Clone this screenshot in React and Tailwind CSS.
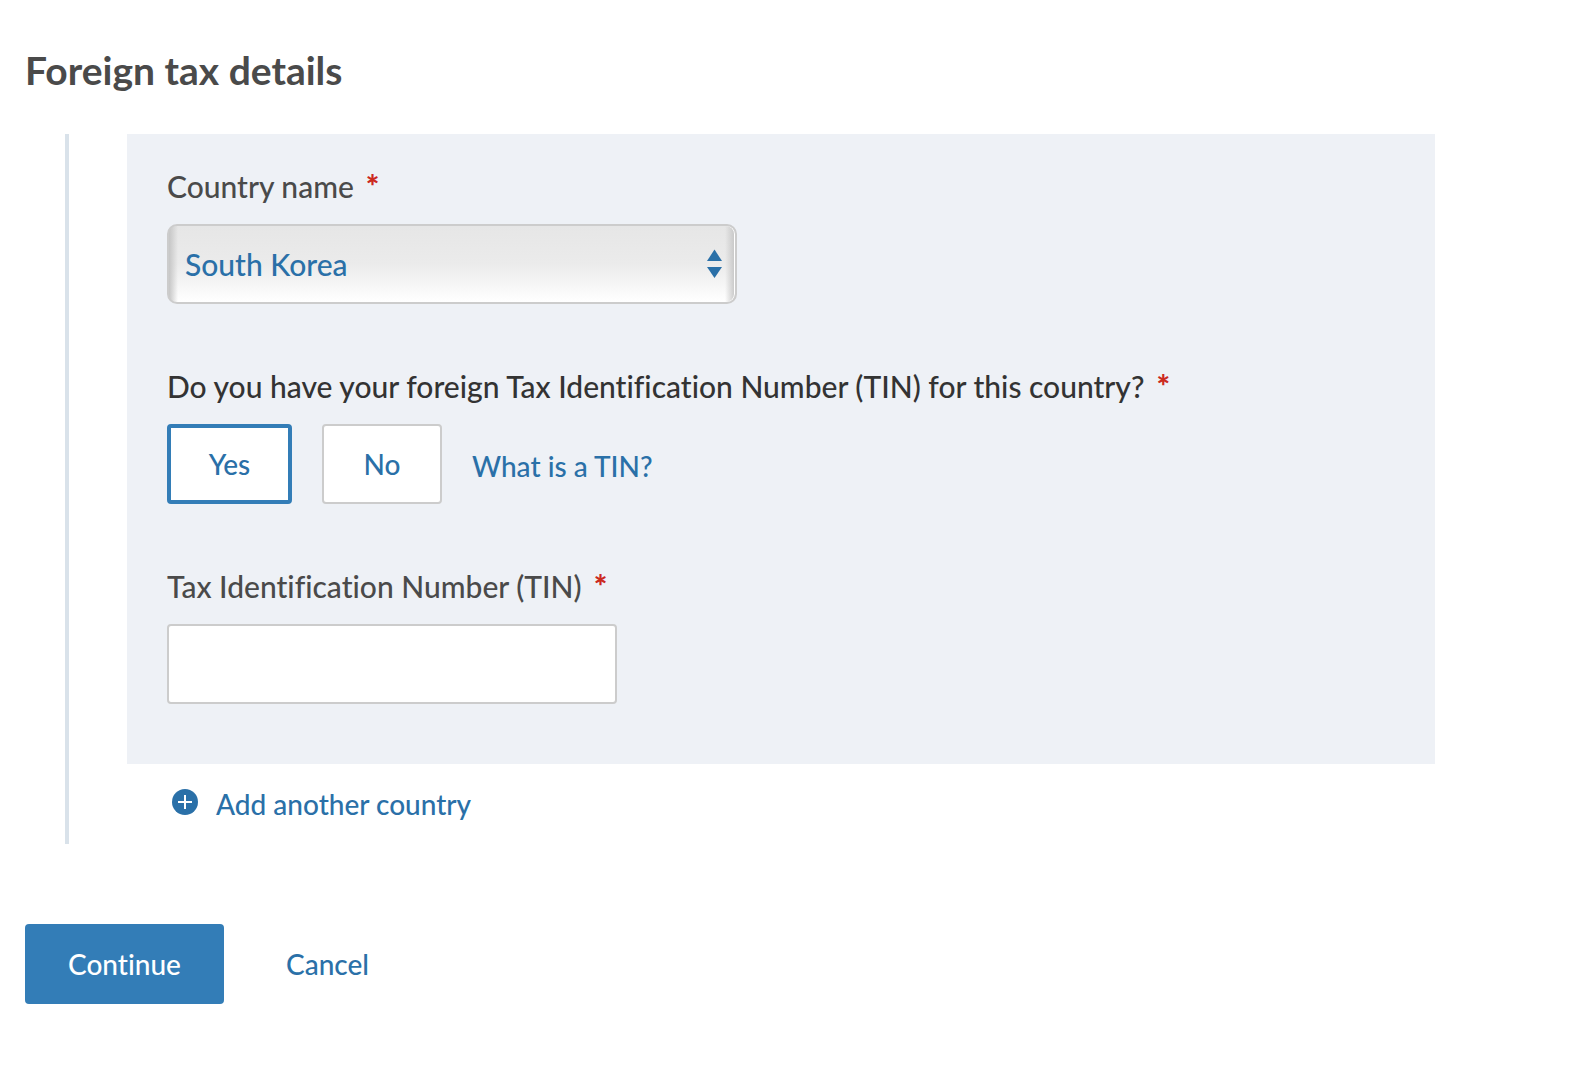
import { useState } from "react";

const Required = () => (
  <span className="ml-3 text-[32px] leading-none font-black text-[#cc2a1e]">
    *
  </span>
);

const Label = ({ htmlFor, children }) => (
  <label
    htmlFor={htmlFor}
    className="block h-[60px] text-[30px] leading-[44px] text-[#4a4a4a]"
  >
    {children}
    <Required />
  </label>
);

const ChoiceButton = ({ selected, onClick, children }) => (
  <button
    type="button"
    aria-pressed={selected}
    onClick={onClick}
    className={`h-20 cursor-pointer rounded-[4px] bg-white text-[28px] text-[#2a70a8] ${
      selected
        ? "w-[125px] border-4 border-[#337db7]"
        : "w-[120px] border-2 border-[#cccccc]"
    }`}
  >
    {children}
  </button>
);

const App = () => {
  const [country, setCountry] = useState("South Korea");
  const [hasTin, setHasTin] = useState(true);
  const [tin, setTin] = useState("");

  return (
    <form
      onSubmit={(e) => e.preventDefault()}
      className="min-h-screen bg-white pt-10 pr-[139px] pb-10 pl-[25px] font-['Lato','Open_Sans',sans-serif] font-medium [font-variant-ligatures:none]"
    >
      <h1 className="text-[39px] leading-[60px] font-bold text-[#4a4a4a]">
        Foreign tax details
      </h1>

      <div className="mt-[34px] ml-10 border-l-4 border-[#d9e2ea] pl-[58px]">
        <div className="bg-[#eef1f6] px-10 pt-[30px] pb-[60px]">
          {/* Country */}
          <Label htmlFor="country">Country name</Label>
          <div className="relative w-full max-w-[570px]">
            <select
              id="country"
              value={country}
              onChange={(e) => setCountry(e.target.value)}
              className="h-20 w-full appearance-none rounded-[10px] border-2 border-[#cccccc] bg-[linear-gradient(to_right,#c6c6c6,transparent_9px,transparent_calc(100%-10px),#c6c6c6),linear-gradient(#e6e6e6,#ebebeb_50%,#ffffff)] px-4 text-[30px] text-[#2a70a8] shadow-[inset_-1px_0_0_#ffffff]"
            >
              <option>South Korea</option>
            </select>
            <svg
              viewBox="0 0 15 30"
              className="pointer-events-none absolute top-6 right-[15px] h-[30px] w-[15px] fill-[#2a70a8]"
            >
              <path d="M7.5 1.5 15 13H0z" />
              <path d="M0 19h15L7.5 30z" />
            </svg>
          </div>

          {/* TIN question */}
          <div className="mt-[60px]" role="group" aria-labelledby="has-tin">
            <p
              id="has-tin"
              className="h-[60px] text-[30px] leading-[44px] text-[#333333]"
            >
              Do you have your foreign Tax Identification Number (TIN) for this
              country?
              <Required />
            </p>
            <div className="flex items-center gap-[30px]">
              <ChoiceButton selected={hasTin} onClick={() => setHasTin(true)}>
                Yes
              </ChoiceButton>
              <ChoiceButton selected={!hasTin} onClick={() => setHasTin(false)}>
                No
              </ChoiceButton>
              <a href="#tin-help" className="pt-1 text-[28px] text-[#2a70a8]">
                What is a TIN?
              </a>
            </div>
          </div>

          {/* TIN value */}
          <div className="mt-[60px]">
            <Label htmlFor="tin">Tax Identification Number (TIN)</Label>
            <input
              id="tin"
              type="text"
              value={tin}
              onChange={(e) => setTin(e.target.value)}
              className="block h-20 w-full max-w-[450px] rounded-[4px] border-2 border-[#cccccc] bg-white px-4 text-[30px] text-[#4a4a4a]"
            />
          </div>
        </div>

        <button
          type="button"
          className="ml-[45px] flex h-20 cursor-pointer items-center gap-[18px] text-[28px] text-[#2a70a8]"
        >
          <svg viewBox="0 0 26 26" className="mb-1 h-[26px] w-[26px]">
            <circle cx="13" cy="13" r="13" fill="#2a70a8" />
            <path d="M13 6v14M6 13h14" stroke="#fff" strokeWidth="2" />
          </svg>
          Add another country
        </button>
      </div>

      <div className="mt-20 flex items-center gap-[62px]">
        <button
          type="submit"
          className="h-20 w-[199px] cursor-pointer rounded-[4px] bg-[#337db7] text-[28px] text-white"
        >
          Continue
        </button>
        <a href="#cancel" className="text-[28px] text-[#2a70a8]">
          Cancel
        </a>
      </div>
    </form>
  );
};

export default App;
